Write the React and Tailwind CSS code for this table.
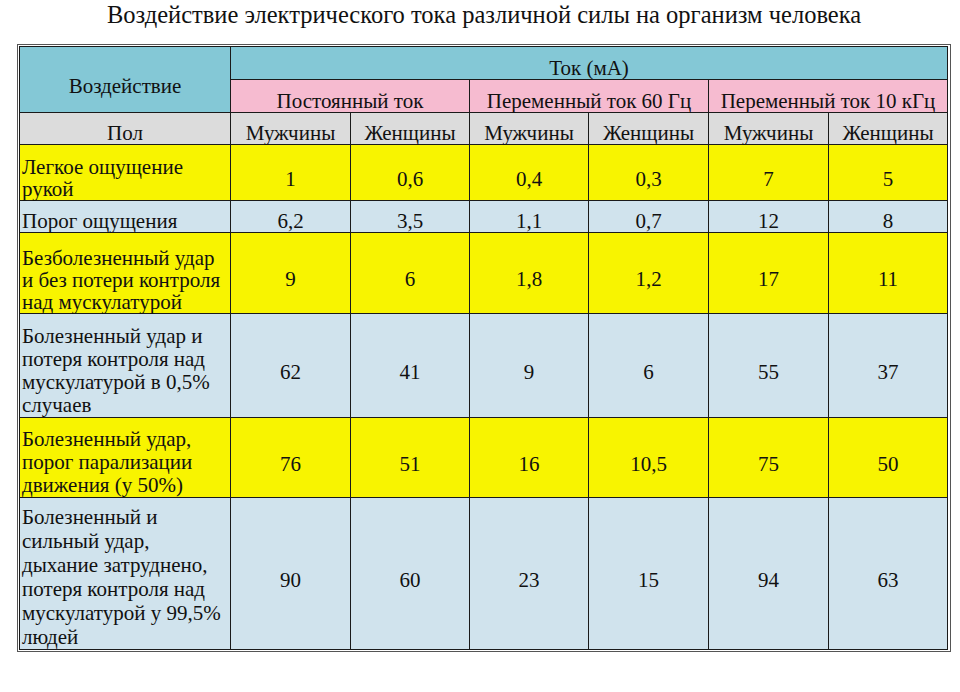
export default function App() {
  const rows = [
    { label: ["Легкое ощущение", "рукой"], vals: ["1", "0,6", "0,4", "0,3", "7", "5"], bg: "bg-[#f8f400]", h: "h-[56px]", lh: "leading-[22px]" },
    { label: ["Порог ощущения"], vals: ["6,2", "3,5", "1,1", "0,7", "12", "8"], bg: "bg-[#d0e3ed]", h: "h-[32px]", lh: "leading-[22px]", low: true },
    { label: ["Безболезненный удар", "и без потери контроля", "над мускулатурой"], vals: ["9", "6", "1,8", "1,2", "17", "11"], bg: "bg-[#f8f400]", h: "h-[81px]", lh: "leading-[22px]" },
    { label: ["Болезненный удар и", "потеря контроля над", "мускулатурой в 0,5%", "случаев"], vals: ["62", "41", "9", "6", "55", "37"], bg: "bg-[#d0e3ed]", h: "h-[104px]", lh: "leading-[23px]" },
    { label: ["Болезненный удар,", "порог парализации", "движения (у 50%)"], vals: ["76", "51", "16", "10,5", "75", "50"], bg: "bg-[#f8f400]", h: "h-[80px]", lh: "leading-[23px]" },
    { label: ["Болезненный и", "сильный удар,", "дыхание затруднено,", "потеря контроля над", "мускулатурой у 99,5%", "людей"], vals: ["90", "60", "23", "15", "94", "63"], bg: "bg-[#d0e3ed]", h: "h-[152px]", lh: "leading-[24px]" },
  ];
  const cell = "border border-[#1a1a1a] p-0";
  const head = ["Мужчины", "Женщины", "Мужчины", "Женщины", "Мужчины", "Женщины"];
  return (
    <div className="w-[960px] h-[692px] bg-white text-[#111] font-['Liberation_Serif','Times_New_Roman',serif]">
      <div className="pt-[1px] pl-[8px] text-center text-[24.5px] leading-[28px]">
        Воздействие электрического тока различной силы на организм человека
      </div>
      <div className="mt-[15px] ml-[17px] w-[934px] border border-[#555] p-[1px]">
        <table className="w-[928px] table-fixed border-collapse border border-[#1a1a1a] text-[21px]">
          <colgroup>
            <col className="w-[211px]" />
            <col className="w-[120px]" />
            <col className="w-[119px]" />
            <col className="w-[119px]" />
            <col className="w-[120px]" />
            <col className="w-[120px]" />
            <col className="w-[119px]" />
          </colgroup>
          <tbody>
            <tr className="h-[33px]">
              <td rowSpan={2} className={`${cell} bg-[#84c8d6] text-center align-middle pt-[13px] leading-[22px]`}>
                Воздействие
              </td>
              <td colSpan={6} className={`${cell} bg-[#84c8d6] text-center align-bottom leading-[22px]`}>
                Ток (мА)
              </td>
            </tr>
            <tr className="h-[33px]">
              <td colSpan={2} className={`${cell} bg-[#f6bbd0] text-center align-bottom leading-[22px]`}>
                Постоянный ток
              </td>
              <td colSpan={2} className={`${cell} bg-[#f6bbd0] text-center align-bottom leading-[22px]`}>
                Переменный ток 60 Гц
              </td>
              <td colSpan={2} className={`${cell} bg-[#f6bbd0] text-center align-bottom leading-[22px]`}>
                Переменный ток 10 кГц
              </td>
            </tr>
            <tr className="h-[32px]">
              <td className={`${cell} bg-[#dcdcdc] text-center align-bottom leading-[22px]`}>Пол</td>
              {head.map((t, i) => (
                <td key={i} className={`${cell} bg-[#dcdcdc] text-center align-bottom leading-[22px]`}>
                  {t}
                </td>
              ))}
            </tr>
            {rows.map((r, ri) => (
              <tr key={ri} className={r.h}>
                <td className={`${cell} ${r.bg} align-bottom pl-[2px] ${r.lh}`}>
                  {r.label.map((l, li) => (
                    <div key={li} className="whitespace-nowrap">{l}</div>
                  ))}
                </td>
                {r.vals.map((v, vi) => (
                  <td
                    key={vi}
                    className={`${cell} ${r.bg} text-center leading-[22px] ${r.low ? "align-bottom" : "align-middle pt-[12px]"}`}
                  >
                    {v}
                  </td>
                ))}
              </tr>
            ))}
          </tbody>
        </table>
      </div>
    </div>
  );
}
